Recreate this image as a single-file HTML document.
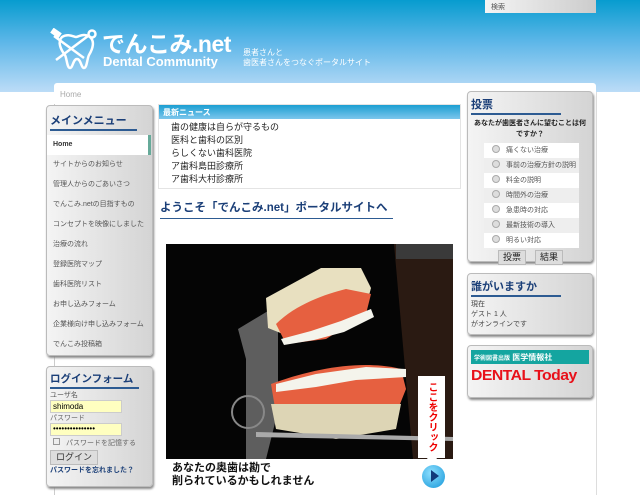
<!DOCTYPE html>
<html><head><meta charset="utf-8"><style>
*{margin:0;padding:0;box-sizing:border-box}
body{width:640px;height:495px;overflow:hidden;position:relative;font-family:"Liberation Sans","Noto Sans CJK JP",sans-serif;background:#fff}
.bg{position:absolute;left:0;top:0;width:640px;height:92px;background:linear-gradient(#079ccf,#5cb6e8 45%,#bcdcf7)}
.a{position:absolute}
.box{position:absolute;background:linear-gradient(90deg,#f4f4f4,#d4d4d4);border:1px solid #bbb;border-radius:4px;box-shadow:1px 2px 2px #888}
.h{font-size:11px;font-weight:bold;color:#1b3f78;border-bottom:2px solid #2d5b92;padding-bottom:1px;white-space:nowrap}
.mi{height:20px;line-height:20px;font-size:7px;color:#555;padding-left:6px}
.pr{height:15px;font-size:7px;color:#555;line-height:15px;padding-left:8px}
.pr i{display:inline-block;width:8px;height:8px;border-radius:50%;background:#ddd;border:1px solid #aaa;vertical-align:-1px;margin-right:6px}
</style></head><body>
<div class="bg"></div>
<div class="a" style="left:485px;top:0;width:111px;height:13px;background:linear-gradient(90deg,#f4f4f4,#ccc);font-size:7px;color:#555;padding:2px 6px">検索</div>
<svg class="a" style="left:50px;top:28px" width="48" height="42" viewBox="0 0 48 42"><g fill="none" stroke="#fff" stroke-width="2.5"><path d="M12 9c6-4 12 0 14 0s9-5 15 1c4 5 1 12-2 17-2 4-2 13-5 13s-3-9-7-9-4 9-7 9-3-9-5-13C11 22 7 14 12 9z"/><path d="M4 8l30 22M6 32L38 8"/><circle cx="42" cy="6" r="3.5"/></g><rect x="1" y="2" width="10" height="6" fill="#fff" transform="rotate(35 6 5)"/></svg>
<div class="a" style="left:102px;top:33px;font-size:23px;line-height:23px;font-weight:bold;color:#fff;letter-spacing:-0.5px">でんこみ.net</div>
<div class="a" style="left:103px;top:55px;font-size:13px;line-height:13px;font-weight:bold;color:#fff">Dental Community</div>
<div class="a" style="left:243px;top:48px;font-size:8px;color:#fff;line-height:10px">患者さんと<br>歯医者さんをつなぐポータルサイト</div>
<div class="a" style="left:54px;top:83px;width:542px;height:20px;background:#fff;border-radius:3px"></div>
<div class="a" style="left:60px;top:90px;font-size:8px;color:#aaa">Home</div>
<div class="a" style="left:54px;top:104px;width:1px;height:391px;background:#ccc"></div>
<div class="a" style="left:487px;top:92px;width:110px;height:403px;background:#fff;border-right:1px solid #ddd"></div>

<div class="box" style="left:46px;top:105px;width:107px;height:251px;padding-top:6px">
<div class="h" style="margin:0 15px 4px 3px;font-size:11px">メインメニュー</div>
<div class="mi" style="background:#fff;color:#333;font-weight:bold;border-right:3px solid #6a9;margin-right:1px">Home</div>
<div class="mi">サイトからのお知らせ</div><div class="mi">管理人からのごあいさつ</div><div class="mi">でんこみ.netの目指すもの</div><div class="mi">コンセプトを映像にしました</div><div class="mi">治療の流れ</div><div class="mi">登録医院マップ</div><div class="mi">歯科医院リスト</div><div class="mi">お申し込みフォーム</div><div class="mi">企業様向け申し込みフォーム</div><div class="mi">でんこみ投稿箱</div>
</div>

<div class="box" style="left:46px;top:366px;width:107px;height:121px;padding:4px 3px">
<div class="h" style="margin-right:10px;font-size:10.5px">ログインフォーム</div>
<div style="font-size:7px;color:#555;margin-top:2px;line-height:9px">ユーザ名</div>
<div style="width:72px;height:13px;background:#ffffc0;border:1px solid #ccc;font-size:8px;padding-left:2px;line-height:11px">shimoda</div>
<div style="font-size:7px;color:#666;margin-top:1px;line-height:9px">パスワード</div>
<div style="width:72px;height:13px;background:#ffffc0;border:1px solid #ccc;font-size:8px;padding-left:2px;line-height:9px">•••••••••••••••</div>
<div style="font-size:7px;color:#666;margin-top:2px;padding-left:3px;line-height:10px"><span style="display:inline-block;width:7px;height:7px;border:1px solid #999;background:#eee;margin-right:6px"></span>パスワードを記憶する</div>
<div style="width:48px;height:15px;margin-top:1px;background:#ddd;border:1px solid #bbb;font-size:9px;text-align:center;line-height:13px;color:#333">ログイン</div>
<div style="font-size:7px;font-weight:bold;color:#1b3f78;margin-top:1px;line-height:9px">パスワードを忘れました？</div>
</div>

<div class="a" style="left:158px;top:104px;width:303px;height:85px;border:1px solid #e4e4e4">
<div style="height:14px;background:linear-gradient(#1c9fd2,#7cc6ec);color:#fff;font-size:8px;font-weight:bold;padding:2px 4px">最新ニュース</div>
<div style="font-size:9px;color:#222;line-height:13px;padding:2px 0 0 12px">歯の健康は自らが守るもの<br>医科と歯科の区別<br>らしくない歯科医院<br>ア歯科島田診療所<br>ア歯科大村診療所</div>
</div>
<div class="a" style="left:160px;top:199px;width:233px;font-size:11.5px;font-weight:bold;color:#1b3f78;border-bottom:1px solid #2d5b92;padding-bottom:3px">ようこそ「でんこみ.net」ポータルサイトへ</div>

<svg class="a" style="left:166px;top:244px" width="287" height="215" viewBox="0 0 287 215">
<rect width="287" height="215" fill="#050505"/>
<path d="M228 0h59v215h-40z" fill="#2a1a12"/>
<path d="M230 0h57v15h-57z" fill="#3a3a3a"/>
<path d="M72 85l30-18 10 0 0 100-12 48h-20l0-100z" fill="#5e5e5e"/>
<path d="M100 54l55-30h40l10 20-8 30-70 20-25-10z" fill="#e8e0c0"/>
<path d="M110 80c20-20 50-30 70-35l25 5-5 20-40 25-40 5z" fill="#e66040"/>
<path d="M115 95l30-8 30-10 30-12 3 8-30 15-30 8-30 5z" fill="#f4f4ec"/>
<path d="M105 140c40-15 90-25 130-15l5 20-10 25-70 10-50-10z" fill="#e66040"/>
<path d="M110 140l40-10 50-7 40 2 0 8-50 3-40 7-40 5z" fill="#f4f4ec"/>
<path d="M105 160l130 0-5 25-60 10-60-10z" fill="#ddd5b5"/>
<path d="M90 188l197 5v4l-197-4z" fill="#aaa"/>
<circle cx="82" cy="168" r="16" fill="none" stroke="#888" stroke-width="2"/>
</svg>
<div class="a" style="left:418px;top:376px;width:27px;height:82px;background:#fff;color:#e00;font-size:10px;font-weight:bold;writing-mode:vertical-rl;text-align:center;line-height:27px">ここをクリック</div>
<div class="a" style="left:426px;top:457px;width:0;height:0;border-left:6px solid transparent;border-right:6px solid transparent;border-top:7px solid #fff"></div>
<div class="a" style="left:172px;top:462px;font-size:11px;font-weight:bold;color:#111;line-height:13px">あなたの奥歯は勘で<br>削られているかもしれません</div>
<div class="a" style="left:422px;top:465px;width:23px;height:23px;border-radius:50%;background:radial-gradient(circle at 40% 35%,#8fe0ff,#1496d8)"></div>
<div class="a" style="left:431px;top:470px;border-top:6px solid transparent;border-bottom:6px solid transparent;border-left:8px solid #123a7a"></div>

<div class="box" style="left:467px;top:91px;width:126px;height:171px;padding:4px 3px">
<div class="h" style="margin-right:28px">投票</div>
<div style="font-size:7px;font-weight:bold;text-align:center;color:#222;line-height:11px;margin-top:3px">あなたが歯医者さんに望むことは何ですか？</div>
<div style="margin:3px 10px 0 13px;background:#fff">
<div class="pr"><i></i>痛くない治療</div><div class="pr" style="background:#eee"><i></i>事前の治療方針の説明</div><div class="pr"><i></i>料金の説明</div><div class="pr" style="background:#eee"><i></i>時間外の治療</div><div class="pr"><i></i>急患時の対応</div><div class="pr" style="background:#eee"><i></i>最新技術の導入</div><div class="pr"><i></i>明るい対応</div></div>
<div style="margin:2px 0 0 27px;font-size:9px;color:#222"><span style="display:inline-block;width:28px;height:15px;border:1px solid #bbb;background:#ddd;text-align:center;line-height:13px">投票</span><span style="display:inline-block;width:28px;height:15px;border:1px solid #bbb;background:#ddd;text-align:center;line-height:13px;margin-left:9px">結果</span></div>
</div>

<div class="box" style="left:467px;top:273px;width:126px;height:62px;padding:4px 3px">
<div class="h" style="margin-right:28px">誰がいますか</div>
<div style="font-size:7px;color:#444;line-height:10px;margin-top:3px">現在<br>ゲスト 1 人<br>がオンラインです</div>
</div>

<div class="box" style="left:467px;top:345px;width:126px;height:53px;padding:4px 3px">
<div style="height:14px;background:#14a5a0;color:#fff;font-size:8px;font-weight:bold;padding:2px 3px;white-space:nowrap"><span style="font-size:6px">学術図書出版</span> 医学情報社</div>
<div style="color:#e8101a;font-size:15px;font-weight:bold;font-family:'Liberation Sans',sans-serif;letter-spacing:-0.5px;margin-top:3px;white-space:nowrap;transform:scaleX(1.05);transform-origin:left">DENTAL Today</div>
</div>
</body></html>
